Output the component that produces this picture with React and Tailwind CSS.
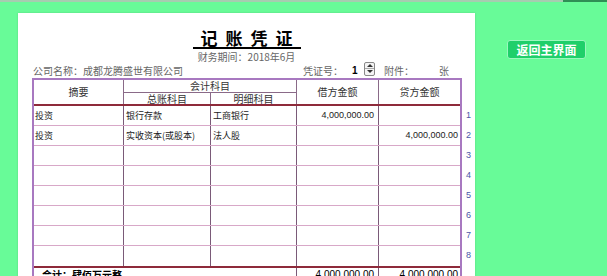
import React from 'react';

const rows = [
  { zy: '投资', zz: '银行存款', mx: '工商银行', jf: '4,000,000.00', df: '' },
  { zy: '投资', zz: '实收资本(或股本)', mx: '法人股', jf: '', df: '4,000,000.00' },
  {}, {}, {}, {}, {}, {},
];

const cjk = { fontFamily: '"Noto Sans CJK SC", "Noto Sans", sans-serif' };
const num = { fontFamily: '"Liberation Sans", Arial, sans-serif' };

export default function App() {
  return (
    <div className="w-[607px] h-[276px] overflow-hidden bg-[#68fb98] flex flex-col" style={cjk}>
      {/* thin strip at the top */}
      <div className="flex h-[2px] shrink-0">
        <div className="flex-1 bg-[#a6cdb0]" />
        <div className="w-[44px] bg-[#2f8f55]" />
      </div>

      <div className="flex flex-1 pt-[11px]">
        {/* voucher sheet */}
        <div className="ml-[18px] w-[457px] bg-white pt-[15px] shadow-[0_0_2px_rgba(0,0,0,0.15)]">
          <div className="flex justify-center">
            <div className="inline-block border-b-2 border-black text-[17px] font-bold leading-[19px] tracking-[8px] pl-[8px] text-black">
              记账凭证
            </div>
          </div>
          <div className="text-center text-[10px] leading-[12px] mt-[2px] text-[#666]">财务期间：2018年6月</div>

          {/* company row */}
          <div className="flex items-center h-[14px] mt-[1px] pl-[15px] text-[10px] leading-none text-[#666]">
            <span className="w-[270px]">公司名称：成都龙腾盛世有限公司</span>
            <span className="w-[49px]">凭证号：</span>
            <span className="w-[12px] font-bold text-black" style={num}>1</span>
            <span className="w-[11px] h-[14px] flex flex-col border border-[#888] rounded-[2px] -mt-[5px] bg-[#f4f4f4]">
              <span className="flex-1 flex items-center justify-center border-b border-[#aaa]">
                <span className="w-0 h-0 border-l-[3px] border-r-[3px] border-b-[3px] border-l-transparent border-r-transparent border-b-[#333]" />
              </span>
              <span className="flex-1 flex items-center justify-center">
                <span className="w-0 h-0 border-l-[3px] border-r-[3px] border-t-[3px] border-l-transparent border-r-transparent border-t-[#333]" />
              </span>
            </span>
            <span className="w-[55px] ml-[9px]">附件：</span>
            <span>张</span>
          </div>

          {/* table + row numbers */}
          <div className="flex pl-[14px]">
            <div className="w-[430px] border-2 border-b-0 border-[#a878c0] text-[#333]">
              {/* header */}
              <div className="flex h-[26px] text-[10px] leading-none border-b-2 border-[#8e2a3a]">
                <div className="w-[90px] border-r border-[#8a6a88] flex items-center justify-center">摘要</div>
                <div className="w-[173px] border-r border-[#8a6a88] flex flex-col">
                  <div className="h-[13px] border-b border-[#8a6a88] flex items-center justify-center">会计科目</div>
                  <div className="flex flex-1">
                    <div className="w-[87px] border-r border-[#8a6a88] flex items-center justify-center">总账科目</div>
                    <div className="w-[85px] flex items-center justify-center">明细科目</div>
                  </div>
                </div>
                <div className="w-[82px] border-r border-[#8a6a88] flex items-center justify-center">借方金额</div>
                <div className="w-[81px] flex items-center justify-center">贷方金额</div>
              </div>

              {/* data rows */}
              {rows.map((r, i) => (
                <div
                  key={i}
                  className={`flex h-[20px] text-[9px] text-[#222] ${i < rows.length - 1 ? 'border-b border-[#d8a8c8]' : ''}`}
                >
                  <div className="w-[90px] border-r border-[#7a5a78] flex items-center pl-[1px]">{r.zy}</div>
                  <div className="w-[87px] border-r border-[#7a5a78] flex items-center pl-[2px]">{r.zz}</div>
                  <div className="w-[86px] border-r border-[#7a5a78] flex items-center pl-[2px]">{r.mx}</div>
                  <div className="w-[82px] border-r border-[#7a5a78] flex items-center justify-end pr-[4px]" style={num}>{r.jf}</div>
                  <div className="w-[81px] flex items-center justify-end pr-[2px]" style={num}>{r.df}</div>
                </div>
              ))}

              {/* total */}
              <div className="flex h-[20px] border-t-2 border-[#8e2a3a] text-[10px] leading-[12px] text-black">
                <div className="w-[263px] border-r border-[#7a5a78] pl-[8px] pt-[1px] font-bold">合计：肆佰万元整</div>
                <div className="w-[82px] border-r border-[#7a5a78] text-right pr-[4px] pt-[1px]" style={num}>4,000,000.00</div>
                <div className="w-[81px] text-right pr-[2px] pt-[1px]" style={num}>4,000,000.00</div>
              </div>
            </div>

            <div className="w-[14px] pt-[28px] text-[9px] text-[#4a58a8]" style={num}>
              {rows.map((_, i) => (
                <div key={i} className="h-[20px] flex items-center justify-center">{i + 1}</div>
              ))}
            </div>
          </div>
        </div>

        {/* right side */}
        <div className="pl-[32px] pt-[27px]">
          <button className="w-[79px] h-[19px] rounded-[3px] bg-[#1fcf6a] border border-[#9af7be] text-white text-[12px] font-bold leading-none flex items-center justify-center">
            返回主界面
          </button>
        </div>
      </div>
    </div>
  );
}
